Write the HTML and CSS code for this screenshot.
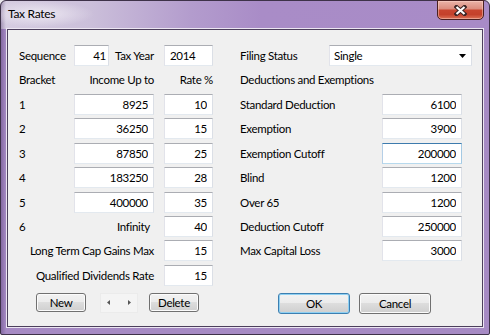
FILE: index.html
```html
<!DOCTYPE html>
<html lang="en">
<head>
<meta charset="utf-8">
<title>Tax Rates</title>
<link rel="stylesheet" href="styles.css">
</head>
<body>
<div class="window">
  <div class="titlebar">
    <span class="title">Tax Rates</span>
    <div class="close" aria-label="Close">
      <svg width="13" height="11" viewBox="0 0 13 11"><path d="M2.5 2 L10.5 9 M10.5 2 L2.5 9" stroke="#3b2424" stroke-width="4.2" stroke-linecap="square" fill="none"/><path d="M2.5 2 L10.5 9 M10.5 2 L2.5 9" stroke="#ffffff" stroke-width="2.2" stroke-linecap="butt" fill="none"/></svg>
    </div>
  </div>
  <div class="frame">
    <div class="client">
      <div class="form">
        <span class="lbl c1">Sequence</span>
        <div class="c2 seqwrap"><input class="tb seq" value="41"><span class="lbl">Tax Year</span></div>
        <input class="tb c4 left" value="2014">
        <div class="filing">
          <span class="lbl">Filing Status</span>
          <div class="combo"><span>Single</span><svg width="7" height="4" viewBox="0 0 7 4"><path d="M0 0 H7 L3.5 4 Z" fill="#000"/></svg></div>
        </div>

        <span class="lbl c1">Bracket</span>
        <span class="lbl c2 r">Income Up to</span>
        <span class="lbl c4 r">Rate %</span>
        <span class="lbl c6 wide">Deductions and Exemptions</span>

        <span class="lbl c1">1</span>
        <input class="tb c2" value="8925">
        <input class="tb c4" value="10">
        <span class="lbl c6">Standard Deduction</span>
        <input class="tb c7" value="6100">

        <span class="lbl c1">2</span>
        <input class="tb c2" value="36250">
        <input class="tb c4" value="15">
        <span class="lbl c6">Exemption</span>
        <input class="tb c7" value="3900">

        <span class="lbl c1">3</span>
        <input class="tb c2" value="87850">
        <input class="tb c4" value="25">
        <span class="lbl c6">Exemption Cutoff</span>
        <input class="tb c7 focus" value="200000">

        <span class="lbl c1">4</span>
        <input class="tb c2" value="183250">
        <input class="tb c4" value="28">
        <span class="lbl c6">Blind</span>
        <input class="tb c7" value="1200">

        <span class="lbl c1">5</span>
        <input class="tb c2" value="400000">
        <input class="tb c4" value="35">
        <span class="lbl c6">Over 65</span>
        <input class="tb c7" value="1200">

        <span class="lbl c1">6</span>
        <span class="lbl c2 r inf">Infinity</span>
        <input class="tb c4" value="40">
        <span class="lbl c6">Deduction Cutoff</span>
        <input class="tb c7" value="250000">

        <span class="lbl c12 r">Long Term Cap Gains Max</span>
        <input class="tb c4" value="15">
        <span class="lbl c6">Max Capital Loss</span>
        <input class="tb c7" value="3000">

        <span class="lbl c12 r">Qualified Dividends Rate</span>
        <input class="tb c4" value="15">
      </div>
      <div class="buttons">
        <button class="btn small">New</button>
        <div class="spin">
          <svg width="3" height="5" viewBox="0 0 3 5"><path d="M3 0 V5 L0 2.5 Z" fill="#555"/></svg>
          <svg width="3" height="5" viewBox="0 0 3 5"><path d="M0 0 V5 L3 2.5 Z" fill="#555"/></svg>
        </div>
        <button class="btn small del">Delete</button>
        <button class="btn big ok">OK</button>
        <button class="btn big cancel">Cancel</button>
      </div>
    </div>
  </div>
</div>
</body>
</html>
```
FILE: styles.css
```css
html, body {
  margin: 0;
  padding: 0;
}
body {
  background: #e9e7ec;
  font-family: Lato, "Liberation Sans", sans-serif;
  font-size: 11.5px;
  letter-spacing: -0.3px;
  color: #000;
}
.window {
  width: 490px;
  height: 335px;
  box-sizing: border-box;
  border: 1px solid #3e3249;
  border-radius: 6px 6px 2px 2px;
  padding: 0 5px 6px;
  display: flex;
  flex-direction: column;
  background:
    radial-gradient(ellipse 55px 13px at 38px 13px, rgba(238,234,243,0.95), rgba(238,234,243,0) 100%),
    linear-gradient(to right, rgba(70,45,100,0.35), rgba(70,45,100,0) 5px),
    linear-gradient(to right, #d6cde1 0, #cbbfda 90px, #b39ccd 190px, #a98cc7 260px, #a88bc7 100%) 0 0 / 100% 28px no-repeat,
    #a68ac4;
}
.titlebar {
  height: 27px;
  display: flex;
  justify-content: space-between;
  align-items: flex-start;
}
.title {
  padding: 5px 0 0 2px;
  line-height: 15px;
  font-size: 12px;
}
.close {
  width: 47px;
  height: 20px;
  margin-top: -1px;
  box-sizing: border-box;
  border: 1px solid #4a2020;
  border-radius: 0 0 5px 5px;
  background: linear-gradient(#eab3a8 0%, #dc8e7f 42%, #c8452f 52%, #c4412b 75%, #dc7257 100%);
  box-shadow: inset 0 0 0 1px rgba(255,220,210,0.45);
  display: flex;
  align-items: center;
  justify-content: center;
}
.frame {
  flex: 1;
  display: flex;
  border: 1px solid #ece6f2;
}
.client {
  flex: 1;
  border: 1px solid #4c3f5c;
  background: #f0f0f0;
  padding: 15px 0 0 11px;
  box-sizing: border-box;
}
.form {
  display: grid;
  grid-template-columns: 55px 80px 10px 49px 27px 142px 80px 10px;
  grid-auto-rows: 21px;
  row-gap: 3.43px;
}
.lbl {
  display: flex;
  align-items: center;
  white-space: nowrap;
}
.c1 { grid-column: 1; }
.c2 { grid-column: 2; }
.c4 { grid-column: 4; }
.c6 { grid-column: 6; }
.c7 { grid-column: 7; }
.c12 { grid-column: 1 / 3; }
.wide { grid-column: 6 / 9; }
.r { justify-content: flex-end; }
.inf { padding-right: 4px; }
.seqwrap {
  display: flex;
  align-items: center;
  gap: 6px;
}
.tb {
  box-sizing: border-box;
  width: 100%;
  height: 21px;
  margin: 0;
  border: 1px solid;
  border-color: #abadb3 #dbdfe6 #e3e9ef #e2e3ea;
  background: #fff;
  font: inherit;
  letter-spacing: inherit;
  color: #000;
  padding: 0 5px;
  text-align: right;
  outline: none;
}
.tb.seq {
  width: 35px;
  padding-right: 2px;
}
.tb.left { text-align: left; }
.tb.focus { border-color: #3d7bad #a4c9e3 #b7d9ed #b5cfe7; }
.filing {
  grid-column: 6 / 9;
  display: flex;
  justify-content: space-between;
}
.combo {
  width: 143px;
  box-sizing: border-box;
  height: 21px;
  border: 1px solid;
  border-color: #abadb3 #dbdfe6 #e3e9ef #e2e3ea;
  background: #fff;
  display: flex;
  align-items: center;
  justify-content: space-between;
  padding: 0 5px 0 4px;
}
.buttons {
  display: flex;
  align-items: flex-start;
  margin: 7px 0 0 17px;
}
.btn {
  box-sizing: border-box;
  margin: 0;
  padding: 0;
  font: inherit;
  letter-spacing: inherit;
  color: #000;
  border: 1px solid #707070;
  border-radius: 3px;
  background: linear-gradient(#f2f2f2 0%, #ebebeb 50%, #dddddd 50%, #cfcfcf 100%);
  box-shadow: inset 0 0 0 1px #fbfbfb;
  display: flex;
  align-items: center;
  justify-content: center;
}
.btn.small { width: 50px; height: 19px; }
.btn.big { width: 72px; height: 21px; }
.spin {
  box-sizing: border-box;
  width: 38px;
  height: 20px;
  margin-left: 14px;
  border: 1px solid #ebebeb;
  background: #f4f4f4;
  display: flex;
  align-items: center;
  justify-content: space-between;
  padding: 0 6px;
}
.btn.del { margin-left: 11px; }
.btn.ok {
  margin-left: 79px;
  border-color: #3c7fb1;
  box-shadow: inset 0 0 0 1px #8fd0f2;
}
.btn.cancel { margin-left: 9px; }
```
